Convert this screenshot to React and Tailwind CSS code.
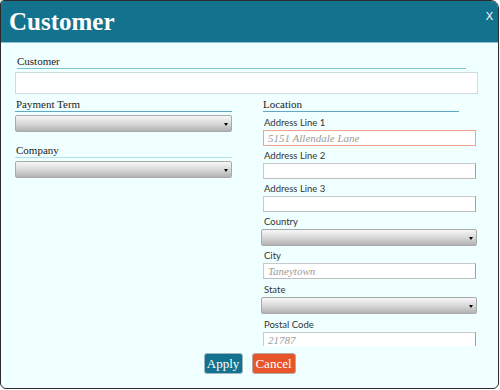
import React from 'react'

// Right column fields: kind, label, placeholder, label block height, error state
const LOCATION_FIELDS = [
  { kind: 'input',  label: 'Address Line 1', placeholder: '5151 Allendale Lane', gap: 'h-[18px]', error: true },
  { kind: 'input',  label: 'Address Line 2', placeholder: '',                     gap: 'h-[17px]' },
  { kind: 'input',  label: 'Address Line 3', placeholder: '',                     gap: 'h-[17px]' },
  { kind: 'select', label: 'Country',        placeholder: '',                     gap: 'h-[17px]' },
  { kind: 'input',  label: 'City',           placeholder: 'Taneytown',            gap: 'h-[17px]' },
  { kind: 'select', label: 'State',          placeholder: '',                     gap: 'h-[18px]' },
  { kind: 'input',  label: 'Postal Code',    placeholder: '21787',                gap: 'h-[18px]' },
]

const serif = "font-['Liberation_Serif',serif]"

function SectionLabel({ children, className = '', line = 'border-[#5eaac4]' }) {
  return (
    <div className={`h-[14px] border-b ${line} ${serif} text-[11px] leading-[13px] text-[#222] ${className}`}>
      {children}
    </div>
  )
}

function Select({ className = '' }) {
  return (
    <div className={`h-[17px] flex items-center justify-end pr-[3px] pt-[1px] border border-[#a9a9a9] rounded-[2px] bg-linear-to-b from-[#f7f7f7] via-[#d9d9d9] to-[#b3b3b3] ${className}`}>
      <span className="w-0 h-0 border-l-[2px] border-r-[2px] border-t-[3px] border-l-transparent border-r-transparent border-t-black" />
    </div>
  )
}

function TextInput({ placeholder, error }) {
  return (
    <input
      type="text"
      placeholder={placeholder}
      className={`block ml-[2px] w-[213px] h-[16px] pl-[4px] border bg-white outline-none ${serif} italic text-[11px] placeholder:text-[#9b9b9b] ${
        error ? 'border-[#f2a38c]' : 'border-[#c9c9c9] border-r-[#a0a0a0] border-b-[#bdbdbd]'
      }`}
    />
  )
}

export default function App() {
  return (
    <div className="w-[500px] h-[390px] bg-white">
      <div className="w-[499px] h-[389px] flex flex-col border border-[#2b2b2b] rounded-tl-[4px] rounded-tr-[8px] rounded-b-[6px] bg-[#f0ffff] overflow-hidden">
        {/* ── Header ───────────────────────────────────────────── */}
        <div className="h-[42px] shrink-0 flex justify-between bg-[#13738e] border-b border-[#8cc2cf]">
          <h1 className={`pl-[8px] self-center ${serif} font-bold text-[25px] leading-[30px] text-white`}>Customer</h1>
          <span className="mt-[10px] mr-[5px] font-['Liberation_Sans',sans-serif] text-[11px] leading-[11px] text-white">X</span>
        </div>

        <div className="h-[303px] shrink-0 overflow-hidden pl-[14px] pt-[12px]">
          <SectionLabel className="ml-[2px] w-[449px]" line="border-[#7cc3d4]">Customer</SectionLabel>
          <input
            type="text"
            className="block mt-[3px] w-[463px] h-[22px] bg-white border border-[#cfdcdf] outline-none"
          />

          <div className="mt-[4px] flex">
            {/* Left column */}
            <div className="w-[217px]">
              <SectionLabel className="pl-[1px]">Payment Term</SectionLabel>
              <Select className="mt-[3px]" />
              <SectionLabel className="mt-[12px] pl-[1px]" line="border-[#b3dfe9]">Company</SectionLabel>
              <Select className="mt-[3px]" />
            </div>

            {/* Right column: location */}
            <div className="ml-[29px] w-[217px]">
              <SectionLabel className="ml-[2px] w-[196px]">Location</SectionLabel>
              {LOCATION_FIELDS.map((f) => (
                <div key={f.label}>
                  <div className={`${f.gap} flex items-end pl-[3px] font-['Lato',sans-serif] text-[9.5px] leading-[15px] text-[#333]`}>
                    {f.label}
                  </div>
                  {f.kind === 'select' ? (
                    <Select className="w-[216px]" />
                  ) : (
                    <TextInput placeholder={f.placeholder} error={f.error} />
                  )}
                </div>
              ))}
            </div>
          </div>
        </div>

        {/* ── Footer buttons ───────────────────────────────────── */}
        <div className="pt-[7px] flex justify-center gap-[9px]">
          <button className={`h-[21px] w-[39px] rounded-[3px] border border-[#9fb4bc] bg-[#13738e] ${serif} text-[13px] leading-[19px] text-white`}>
            Apply
          </button>
          <button className={`h-[21px] w-[44px] rounded-[3px] border border-[#b9a9a4] bg-[#e8552b] ${serif} text-[13px] leading-[19px] text-white`}>
            Cancel
          </button>
        </div>
      </div>
    </div>
  )
}
